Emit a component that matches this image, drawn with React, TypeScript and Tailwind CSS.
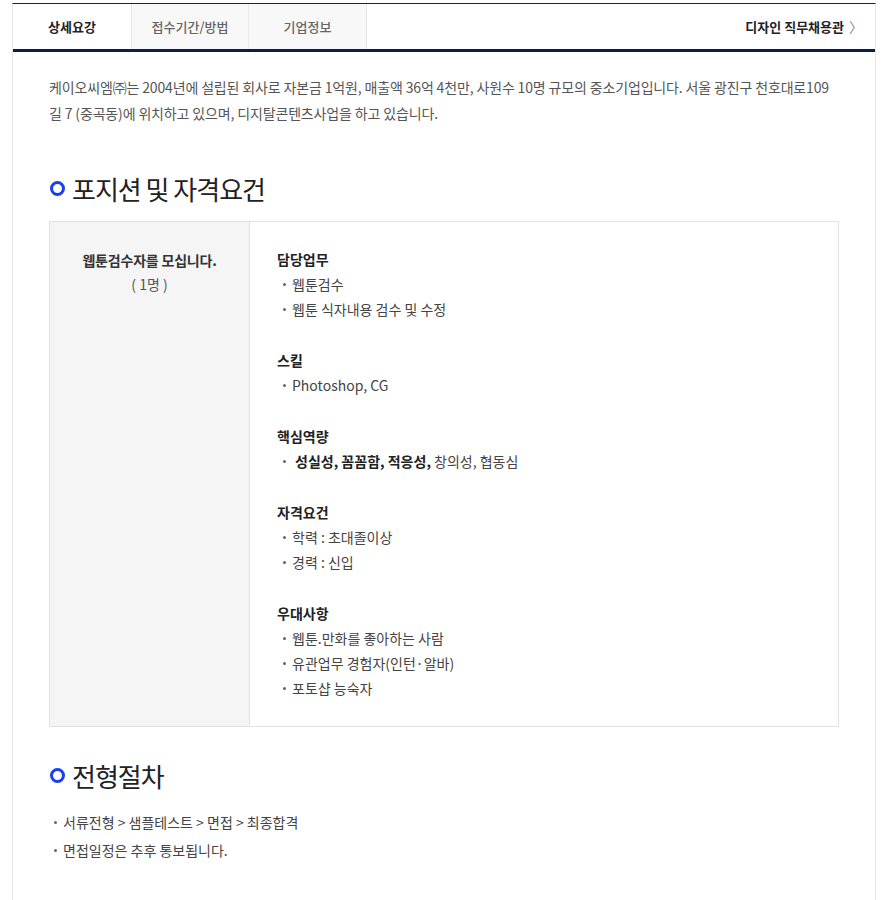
const font = { fontFamily: '"Noto Sans CJK KR", "Noto Sans", sans-serif' };

const duties = [
  { title: '담당업무', items: ['웹툰검수', '웹툰 식자내용 검수 및 수정'] },
  { title: '스킬', items: ['Photoshop, CG'] },
];

const quals = [
  { title: '자격요건', items: ['학력 : 초대졸이상', '경력 : 신입'] },
  { title: '우대사항', items: ['웹툰.만화를 좋아하는 사람', '유관업무 경험자(인턴·알바)', '포토샵 능숙자'] },
];

function Dot({ w = 'w-[15px]' }: { w?: string }) {
  return (
    <span className={`${w} shrink-0 flex items-center pl-[6px]`}>
      <span className="w-[3px] h-[3px] rounded-full bg-[#666]" />
    </span>
  );
}

function Bullet({ children }: { children: React.ReactNode }) {
  return (
    <li className="flex text-[14px] leading-[25px] text-[#444]">
      <Dot />
      <span>{children}</span>
    </li>
  );
}

function Group({ title, items }: { title: string; items: string[] }) {
  return (
    <div>
      <p className="text-[14px] leading-[25px] font-bold text-[#222]">{title}</p>
      <ul>
        {items.map((t) => (
          <Bullet key={t}>{t}</Bullet>
        ))}
      </ul>
    </div>
  );
}

function SectionTitle({ children }: { children: React.ReactNode }) {
  return (
    <h2 className="flex items-center h-[36px] text-[26px] tracking-[-1px] text-[#222] font-normal">
      <span className="w-[15px] h-[15px] rounded-full border-[3.5px] border-[#1a3ff0] mr-[7px] ml-[1px]" />
      {children}
    </h2>
  );
}

export default function App() {
  return (
    <div className="bg-white min-h-[900px] pt-[3px]" style={font}>
      <div className="ml-[12px] w-[864px] border-x border-[#e6e6e6] border-t border-t-[#222] min-h-[897px]">
        {/* tabs */}
        <div className="flex h-[48px] border-b-[3px] border-[#0c1d4f] text-[13px]">
          <div className="w-[118px] flex items-center justify-center font-bold text-[#222]">상세요강</div>
          <div className="w-[118px] flex items-center justify-center bg-[#f8f8f8] border-x border-[#e8e8e8] text-[#666] font-medium">
            접수기간/방법
          </div>
          <div className="w-[118px] flex items-center justify-center bg-[#f8f8f8] border-r border-[#e8e8e8] text-[#666] font-medium">
            기업정보
          </div>
          <div className="flex-1 flex items-center justify-end pr-[12px] font-bold text-[#222]">
            디자인 직무채용관
            <span className="ml-[5px] text-[#888] font-normal text-[14px]">〉</span>
          </div>
        </div>

        <div className="px-[36px] pt-[22px]">
          <p className="text-[14px] leading-[26px] text-[#555] tracking-[-0.15px]">
            케이오씨엠㈜는 2004년에 설립된 회사로 자본금 1억원, 매출액 36억 4천만, 사원수 10명 규모의 중소기업입니다. 서울 광진구 천호대로109<wbr />길 7 (중곡동)에 위치하고 있으며, 디지탈콘텐츠사업을 하고 있습니다.
          </p>

          <div className="mt-[44px]">
            <SectionTitle>포지션 및 자격요건</SectionTitle>
          </div>

          <div className="mt-[15px] flex border border-[#e2e2e2] h-[506px]">
            <div className="w-[200px] shrink-0 bg-[#f5f5f5] border-r border-[#e2e2e2] pt-[26px] text-center">
              <p className="text-[14px] leading-[24px] font-bold text-[#333] tracking-[-0.2px]">웹툰검수자를 모십니다.</p>
              <p className="text-[14px] leading-[24px] text-[#555]">( 1명 )</p>
            </div>
            <div className="flex-1 pl-[27px] pt-[25px] flex flex-col gap-[26px]">
              {duties.map((g) => (
                <Group key={g.title} {...g} />
              ))}
              <div>
                <p className="text-[14px] leading-[25px] font-bold text-[#222]">핵심역량</p>
                <ul>
                  <li className="flex text-[14px] leading-[25px] text-[#444]">
                    <Dot w="w-[18px]" />
                    <span>
                      <b className="text-[#222]">성실성, 꼼꼼함, 적응성,</b> 창의성, 협동심
                    </span>
                  </li>
                </ul>
              </div>
              {quals.map((g) => (
                <Group key={g.title} {...g} />
              ))}
            </div>
          </div>

          <div className="mt-[30px]">
            <SectionTitle>전형절차</SectionTitle>
          </div>
          <ul className="mt-[15px]">
            <li className="flex text-[14px] leading-[28px] text-[#444]">
              <span className="w-[14px] shrink-0 flex items-center pl-[5px]">
                <span className="w-[3px] h-[3px] rounded-full bg-[#666]" />
              </span>
              서류전형 &gt; 샘플테스트 &gt; 면접 &gt; 최종합격
            </li>
            <li className="flex text-[14px] leading-[28px] text-[#444]">
              <span className="w-[14px] shrink-0 flex items-center pl-[5px]">
                <span className="w-[3px] h-[3px] rounded-full bg-[#666]" />
              </span>
              면접일정은 추후 통보됩니다.
            </li>
          </ul>

          <div className="mt-[28px]">
            <SectionTitle>복리후생</SectionTitle>
          </div>
        </div>
      </div>
    </div>
  );
}
